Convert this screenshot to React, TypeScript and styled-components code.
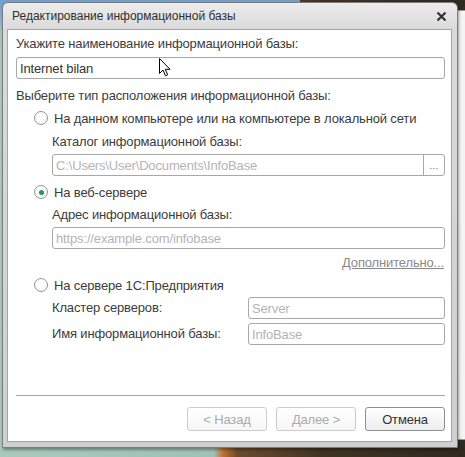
import React from "react";
import styled, { createGlobalStyle } from "styled-components";

const GlobalStyle = createGlobalStyle`
  html, body {
    margin: 0;
    padding: 0;
  }
  body {
    font-family: "Liberation Sans", Arial, sans-serif;
    overflow: hidden;
  }
`;

const Desktop = styled.div`
  position: relative;
  width: 465px;
  height: 457px;
  overflow: hidden;
  background:
    linear-gradient(90deg, #a9c9bd 0%, #9fc2b6 46%, #c0702e 48%, #6b4a2c 51%, #3f3222 70%, #2f2a20 100%);
`;

const BackWindow = styled.div`
  position: absolute;
  left: 300px;
  top: 10px;
  width: 200px;
  height: 430px;
  background: #f4f4f4;
  border: 1px solid #9a9a9a;
  border-radius: 6px 6px 0 0;
  box-sizing: border-box;
`;

const BackSky = styled.div`
  position: absolute;
  left: 0;
  top: 0;
  width: 300px;
  height: 30px;
  background: linear-gradient(180deg, #6f9fcc, #9bbcd8);
`;

const Window = styled.div`
  position: relative;
  margin: 2px 0 0 2px;
  width: 456px;
  height: 446px;
  box-sizing: border-box;
  display: flex;
  flex-direction: column;
  background: linear-gradient(180deg, #ececec 0px, #dadada 27px, #cfcfcf 100%);
  border: 1px solid #7d7d7d;
  border-radius: 6px 6px 0 0;
  padding: 0 5px 5px 4px;
  box-shadow: 1px 2px 3px rgba(0, 0, 0, 0.35);
`;

const TitleBar = styled.div`
  height: 26px;
  flex: none;
  display: flex;
  align-items: center;
  justify-content: space-between;
  padding: 0 3px 0 5px;
  font-size: 12px;
  color: #2f2f2f;
`;

const CloseButton = styled.svg`
  width: 11px;
  height: 11px;
  margin-right: 2px;
`;

const Client = styled.div`
  flex: 1;
  display: flex;
  flex-direction: column;
  background: #fff;
  border: 1px solid #a4a4a4;
  padding: 6px 6px 10px 8px;
  font-size: 13px;
  letter-spacing: -0.15px;
  color: #3c3c3c;
`;

const Label = styled.div<{ $indent?: number; $top?: number }>`
  line-height: 16px;
  padding-left: ${(p) => p.$indent ?? 0}px;
  margin-top: ${(p) => p.$top ?? 0}px;
`;

const Field = styled.div<{ $indent?: number; $top?: number; $grow?: boolean }>`
  position: relative;
  display: flex;
  height: 22px;
  box-sizing: border-box;
  margin-left: ${(p) => p.$indent ?? 0}px;
  margin-top: ${(p) => p.$top ?? 0}px;
  flex: ${(p) => (p.$grow ? 1 : "none")};
  border: 1px solid #a8a8a8;
  border-radius: 3px;
  background: #fff;
  overflow: hidden;
`;

const FieldText = styled.div<{ $placeholder?: boolean }>`
  flex: 1;
  display: flex;
  align-items: center;
  padding-left: 3px;
  color: ${(p) => (p.$placeholder ? "#b4b4b4" : "#333")};
  white-space: nowrap;
`;

const DotsButton = styled.div`
  width: 21px;
  border-left: 1px solid #a8a8a8;
  display: flex;
  align-items: flex-end;
  justify-content: center;
  padding-bottom: 4px;
  box-sizing: border-box;
  font-size: 9px;
  color: #555;
  letter-spacing: 0.5px;
`;

const RadioRow = styled.div<{ $top?: number }>`
  display: flex;
  align-items: center;
  gap: 6px;
  height: 16px;
  padding-left: 18px;
  margin-top: ${(p) => p.$top ?? 0}px;
`;

const RadioCircle = styled.span<{ $checked?: boolean }>`
  width: 14px;
  height: 14px;
  box-sizing: border-box;
  border-radius: 50%;
  border: 1px solid #979797;
  background: radial-gradient(circle at 50% 40%, #ffffff 40%, #ececec 100%);
  display: flex;
  align-items: center;
  justify-content: center;

  &::after {
    content: "";
    display: ${(p) => (p.$checked ? "block" : "none")};
    width: 5px;
    height: 5px;
    border-radius: 50%;
    background: #1f9a4c;
  }
`;

const LinkRow = styled.div`
  display: flex;
  justify-content: flex-end;
  margin-top: 6px;
  line-height: 16px;
  padding-right: 1px;
`;

const MoreLink = styled.span`
  color: #8a8a8a;
  text-decoration: underline;
`;

const PairRow = styled.div<{ $top?: number }>`
  display: flex;
  align-items: center;
  padding-left: 36px;
  margin-top: ${(p) => p.$top ?? 0}px;
`;

const PairLabel = styled.div`
  width: 196px;
  line-height: 16px;
`;

const Footer = styled.div`
  margin-top: auto;
  border-top: 1px solid #a4a4a4;
  padding-top: 11px;
  display: flex;
  justify-content: flex-end;
  gap: 9px;
`;

const Button = styled.div<{ $disabled?: boolean }>`
  width: 80px;
  height: 24px;
  box-sizing: border-box;
  display: flex;
  align-items: center;
  justify-content: center;
  border-radius: 3px;
  border: 1px solid ${(p) => (p.$disabled ? "#cdcdcd" : "#8f8f8f")};
  background: linear-gradient(180deg, #ffffff, ${(p) => (p.$disabled ? "#f6f6f6" : "#ededed")});
  color: ${(p) => (p.$disabled ? "#ababab" : "#333")};
`;

const Cursor = styled.svg`
  position: absolute;
  left: 156px;
  top: 55px;
  width: 12px;
  height: 19px;
`;

export default function App() {
  return (
    <>
      <GlobalStyle />
      <Desktop>
        <BackSky />
        <BackWindow />
        <Window>
          <TitleBar>
            <span>Редактирование информационной базы</span>
            <CloseButton viewBox="0 0 11 11">
              <path d="M1.5 1.5 L9.5 9.5 M9.5 1.5 L1.5 9.5" stroke="#333" strokeWidth="2.2" />
            </CloseButton>
          </TitleBar>
          <Client>
            <Label>Укажите наименование информационной базы:</Label>
            <Field $top={5}>
              <FieldText>Internet bilan</FieldText>
            </Field>
            <Label $top={9}>Выберите тип расположения информационной базы:</Label>
            <RadioRow $top={6}>
              <RadioCircle />
              <span>На данном компьютере или на компьютере в локальной сети</span>
            </RadioRow>
            <Label $indent={36} $top={8}>Каталог информационной базы:</Label>
            <Field $indent={36} $top={4}>
              <FieldText $placeholder>C:\Users\User\Documents\InfoBase</FieldText>
              <DotsButton>...</DotsButton>
            </Field>
            <RadioRow $top={8}>
              <RadioCircle $checked />
              <span>На веб-сервере</span>
            </RadioRow>
            <Label $indent={36} $top={7}>Адрес информационной базы:</Label>
            <Field $indent={36} $top={4}>
              <FieldText $placeholder>https://example.com/infobase</FieldText>
            </Field>
            <LinkRow>
              <MoreLink>Дополнительно...</MoreLink>
            </LinkRow>
            <RadioRow $top={6}>
              <RadioCircle />
              <span>На сервере 1С:Предприятия</span>
            </RadioRow>
            <PairRow $top={4}>
              <PairLabel>Кластер серверов:</PairLabel>
              <Field $grow>
                <FieldText $placeholder>Server</FieldText>
              </Field>
            </PairRow>
            <PairRow $top={4}>
              <PairLabel>Имя информационной базы:</PairLabel>
              <Field $grow>
                <FieldText $placeholder>InfoBase</FieldText>
              </Field>
            </PairRow>
            <Footer>
              <Button $disabled>&lt; Назад</Button>
              <Button $disabled>Далее &gt;</Button>
              <Button>Отмена</Button>
            </Footer>
          </Client>
          <Cursor viewBox="0 0 12 19">
            <path
              d="M0.5 0.5 L0.5 15.5 L4 12 L6.5 17.8 L8.7 16.8 L6.3 11.3 L11 11.3 Z"
              fill="#fff"
              stroke="#000"
              strokeWidth="1"
              strokeLinejoin="round"
            />
          </Cursor>
        </Window>
      </Desktop>
    </>
  );
}
